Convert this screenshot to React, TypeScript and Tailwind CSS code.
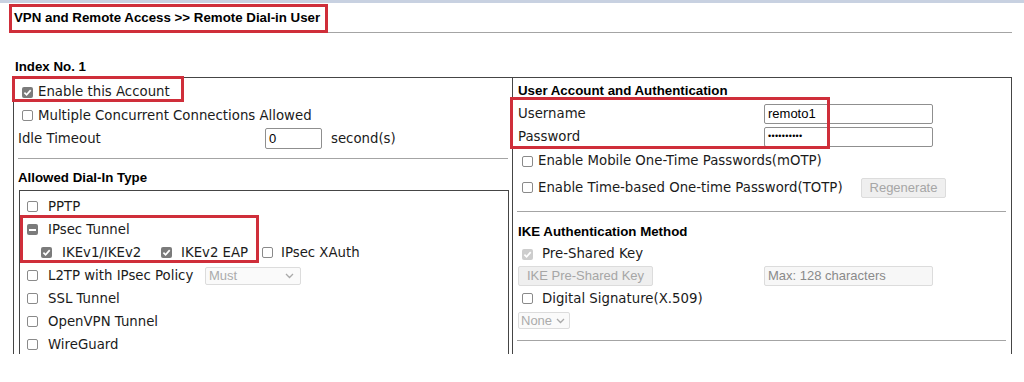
import type { ReactNode } from "react";

type BoxState = "off" | "on" | "mixed" | "dim";

const LABEL = "font-['DejaVu_Sans',sans-serif] text-[13.3px] text-[#1b1b1b]";
const ARIAL = "font-['Liberation_Sans',Arial,sans-serif]";
const HEAD = "font-['Liberation_Sans',Arial,sans-serif] font-bold text-[13.3px] text-black";

// checkbox as drawn by the router ui (small, gray when ticked)
function Box({ state = "off" }: { state?: BoxState }) {
  if (state === "off")
    return <span className="inline-block shrink-0 w-[11px] h-[11px] rounded-[2px] border border-[#8a8a8a] bg-white" />;
  const bg = state === "dim" ? "bg-[#cdcdcd]" : "bg-[#7b7b7b]";
  return (
    <span className={`inline-flex shrink-0 w-[11px] h-[11px] rounded-[2px] items-center justify-center ${bg}`}>
      {state === "mixed" ? (
        <span className="w-[7px] h-[2px] bg-white" />
      ) : (
        <svg width="9" height="9" viewBox="0 0 9 9">
          <path d="M1.4 4.6 L3.6 6.8 L7.7 2.1" fill="none" stroke="white" strokeWidth="1.7" />
        </svg>
      )}
    </span>
  );
}

function Row({ className = "", children }: { className?: string; children: ReactNode }) {
  return <div className={`flex items-center whitespace-nowrap ${className}`}>{children}</div>;
}

function Chevron() {
  return (
    <svg width="9" height="6" viewBox="0 0 9 6">
      <path d="M1 1 L4.5 4.5 L8 1" fill="none" stroke="#a9a9a9" strokeWidth="1.3" />
    </svg>
  );
}

function Marker({ className }: { className: string }) {
  return <span className={`absolute border-[3px] border-[#cf2e3a] pointer-events-none ${className}`} />;
}

export default function App() {
  return (
    <div className={`relative w-[1024px] h-[382px] bg-white overflow-hidden ${LABEL}`}>
      <div className="h-[3px] bg-[#c8d1e1]" />

      {/* title */}
      <div className={`ml-[9px] w-[1003px] h-[30px] border-b border-[#a4a4a4] pl-[5px] flex items-center ${HEAD}`}>
        VPN and Remote Access &gt;&gt; Remote Dial-in User
      </div>

      <div className={`mt-[24px] h-[20px] pl-[15px] flex items-center ${HEAD}`}>Index No. 1</div>

      <div className="ml-[13px] w-[999px] h-[277px] border-t border-l border-r border-[#454545] flex overflow-hidden">
        {/* left side */}
        <div className="w-[498px] shrink-0 pl-[4px] pt-[2px]">
          <Row className="h-[24px]">
            <span className="ml-[4px] flex"><Box state="on" /></span>
            <span className="ml-[5px]">Enable this Account</span>
          </Row>
          <Row className="h-[23px]">
            <span className="ml-[4px] flex"><Box /></span>
            <span className="ml-[5px]">Multiple Concurrent Connections Allowed</span>
          </Row>
          <Row className="h-[23px]">
            <span className="w-[247px]">Idle Timeout</span>
            <div className={`w-[57px] h-[21px] border border-[#8f8f8f] rounded-[2px] px-[3px] flex items-center text-[13px] text-black ${ARIAL}`}>0</div>
            <span className="ml-[9px]">second(s)</span>
          </Row>
          <div className="mt-[8px] h-px w-[490px] bg-[#a4a4a4]" />
          <div className={`h-[31px] pt-[11px] leading-[16px] ${HEAD}`}>Allowed Dial-In Type</div>
          <div className="ml-[1px] w-[490px] h-[170px] border-t border-l border-r border-[#454545] pt-[4px] pl-[7px]">
            <Row className="h-[23px]">
              <Box />
              <span className="ml-[10px]">PPTP</span>
            </Row>
            <Row className="h-[23px]">
              <Box state="mixed" />
              <span className="ml-[10px]">IPsec Tunnel</span>
            </Row>
            <Row className="h-[23px] pl-[14px]">
              <Box state="on" />
              <span className="ml-[10px] w-[85px]">IKEv1/IKEv2</span>
              <span className="ml-[14px] flex"><Box state="on" /></span>
              <span className="ml-[9px] w-[69px]">IKEv2 EAP</span>
              <span className="ml-[12px] flex"><Box /></span>
              <span className="ml-[8px]">IPsec XAuth</span>
            </Row>
            <Row className="h-[23px]">
              <Box />
              <span className="ml-[10px] w-[147px]">L2TP with IPsec Policy</span>
              <div className={`ml-[10px] w-[96px] h-[18px] border border-[#dcdcdc] rounded-[2px] bg-[#fafafa] pl-[3px] pr-[6px] flex items-center justify-between text-[13px] text-[#ababab] ${ARIAL}`}>
                Must
                <Chevron />
              </div>
            </Row>
            <Row className="h-[23px]">
              <Box />
              <span className="ml-[10px]">SSL Tunnel</span>
            </Row>
            <Row className="h-[23px]">
              <Box />
              <span className="ml-[10px]">OpenVPN Tunnel</span>
            </Row>
            <Row className="h-[23px]">
              <Box />
              <span className="ml-[10px]">WireGuard</span>
            </Row>
          </div>
        </div>

        {/* right side */}
        <div className="flex-1 border-l border-[#454545] pl-[5px] pt-[1px]">
          <Row className={`h-[23px] ${HEAD}`}>User Account and Authentication</Row>
          <Row className="h-[23px]">
            <span className="w-[246px]">Username</span>
            <div className={`w-[169px] h-[20px] border border-[#8f8f8f] rounded-[2px] px-[3px] flex items-center text-[13px] text-black ${ARIAL}`}>remoto1</div>
          </Row>
          <Row className="h-[23px]">
            <span className="w-[246px]">Password</span>
            <div className={`w-[169px] h-[20px] border border-[#8f8f8f] rounded-[2px] px-[3px] flex items-center text-[9px] tracking-[0.3px] text-black ${ARIAL}`}>••••••••••</div>
          </Row>
          <Row className="h-[26px]">
            <span className="ml-[4px] flex"><Box /></span>
            <span className="ml-[5px]">Enable Mobile One-Time Passwords(mOTP)</span>
          </Row>
          <Row className="h-[27px]">
            <div className="w-[343px] flex items-center">
              <span className="ml-[4px] flex"><Box /></span>
              <span className="ml-[5px]">Enable Time-based One-time Password(TOTP)</span>
            </div>
            <div className={`w-[85px] h-[20px] border border-[#dcdcdc] rounded-[2px] bg-[#efefef] flex items-center justify-center text-[13px] text-[#a6a6a6] ${ARIAL}`}>Regenerate</div>
          </Row>
          <div className="mt-[10px] -ml-[1px] h-px w-[489px] bg-[#a4a4a4]" />
          <Row className={`mt-[8px] h-[23px] ${HEAD}`}>IKE Authentication Method</Row>
          <Row className="h-[22px]">
            <span className="ml-[4px] flex"><Box state="dim" /></span>
            <span className="ml-[9px]">Pre-Shared Key</span>
          </Row>
          <Row className="h-[22px]">
            <div className="w-[246px]">
              <div className={`w-[135px] h-[20px] border border-[#dcdcdc] rounded-[2px] bg-[#efefef] flex items-center justify-center text-[13px] text-[#a6a6a6] ${ARIAL}`}>IKE Pre-Shared Key</div>
            </div>
            <div className={`w-[169px] h-[20px] border border-[#dcdcdc] rounded-[2px] bg-[#f7f7f7] px-[3px] flex items-center text-[13px] text-[#8a8a8a] ${ARIAL}`}>Max: 128 characters</div>
          </Row>
          <Row className="h-[23px]">
            <span className="ml-[4px] flex"><Box /></span>
            <span className="ml-[9px]">Digital Signature(X.509)</span>
          </Row>
          <div className={`mt-[2px] w-[52px] h-[17px] border border-[#dcdcdc] rounded-[2px] bg-[#fafafa] pl-[2px] pr-[4px] flex items-center justify-between text-[13px] text-[#ababab] ${ARIAL}`}>
            None
            <Chevron />
          </div>
          <div className="mt-[11px] -ml-[1px] h-px w-[489px] bg-[#a4a4a4]" />
        </div>
      </div>

      {/* red annotation boxes */}
      <Marker className="left-[9px] top-[4px] w-[319px] h-[29px]" />
      <Marker className="left-[12px] top-[76px] w-[172px] h-[26px]" />
      <Marker className="left-[510px] top-[97px] w-[320px] h-[52px]" />
      <Marker className="left-[20px] top-[215px] w-[239px] h-[48px]" />
    </div>
  );
}
